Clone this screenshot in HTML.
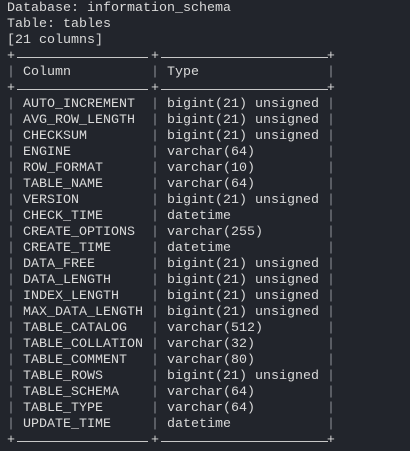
<!DOCTYPE html>
<html><head><style>
html,body{margin:0;padding:0;background:#22252c;width:410px;height:451px;overflow:hidden}
pre{position:absolute;left:7px;top:1px;margin:0;font-family:"Liberation Mono",monospace;font-size:13.34px;line-height:16px;color:#dadada}
.b{color:#8a8d93}
.h{position:absolute;height:1px;background:#c8c8c8}
</style></head><body>
<pre>Database: information_schema
Table: tables
[21 columns]
+                 +                     +
<span class="b">|</span> Column          <span class="b">|</span> Type                <span class="b">|</span>
+                 +                     +
<span class="b">|</span> AUTO_INCREMENT  <span class="b">|</span> bigint(21) unsigned <span class="b">|</span>
<span class="b">|</span> AVG_ROW_LENGTH  <span class="b">|</span> bigint(21) unsigned <span class="b">|</span>
<span class="b">|</span> CHECKSUM        <span class="b">|</span> bigint(21) unsigned <span class="b">|</span>
<span class="b">|</span> ENGINE          <span class="b">|</span> varchar(64)         <span class="b">|</span>
<span class="b">|</span> ROW_FORMAT      <span class="b">|</span> varchar(10)         <span class="b">|</span>
<span class="b">|</span> TABLE_NAME      <span class="b">|</span> varchar(64)         <span class="b">|</span>
<span class="b">|</span> VERSION         <span class="b">|</span> bigint(21) unsigned <span class="b">|</span>
<span class="b">|</span> CHECK_TIME      <span class="b">|</span> datetime            <span class="b">|</span>
<span class="b">|</span> CREATE_OPTIONS  <span class="b">|</span> varchar(255)        <span class="b">|</span>
<span class="b">|</span> CREATE_TIME     <span class="b">|</span> datetime            <span class="b">|</span>
<span class="b">|</span> DATA_FREE       <span class="b">|</span> bigint(21) unsigned <span class="b">|</span>
<span class="b">|</span> DATA_LENGTH     <span class="b">|</span> bigint(21) unsigned <span class="b">|</span>
<span class="b">|</span> INDEX_LENGTH    <span class="b">|</span> bigint(21) unsigned <span class="b">|</span>
<span class="b">|</span> MAX_DATA_LENGTH <span class="b">|</span> bigint(21) unsigned <span class="b">|</span>
<span class="b">|</span> TABLE_CATALOG   <span class="b">|</span> varchar(512)        <span class="b">|</span>
<span class="b">|</span> TABLE_COLLATION <span class="b">|</span> varchar(32)         <span class="b">|</span>
<span class="b">|</span> TABLE_COMMENT   <span class="b">|</span> varchar(80)         <span class="b">|</span>
<span class="b">|</span> TABLE_ROWS      <span class="b">|</span> bigint(21) unsigned <span class="b">|</span>
<span class="b">|</span> TABLE_SCHEMA    <span class="b">|</span> varchar(64)         <span class="b">|</span>
<span class="b">|</span> TABLE_TYPE      <span class="b">|</span> varchar(64)         <span class="b">|</span>
<span class="b">|</span> UPDATE_TIME     <span class="b">|</span> datetime            <span class="b">|</span>
+                 +                     +</pre>
<div class="h" style="left:17px;width:131px;top:57px"></div>
<div class="h" style="left:161px;width:167px;top:57px"></div>
<div class="h" style="left:17px;width:131px;top:89px"></div>
<div class="h" style="left:161px;width:167px;top:89px"></div>
<div class="h" style="left:17px;width:131px;top:441px"></div>
<div class="h" style="left:161px;width:167px;top:441px"></div>
</body></html>
